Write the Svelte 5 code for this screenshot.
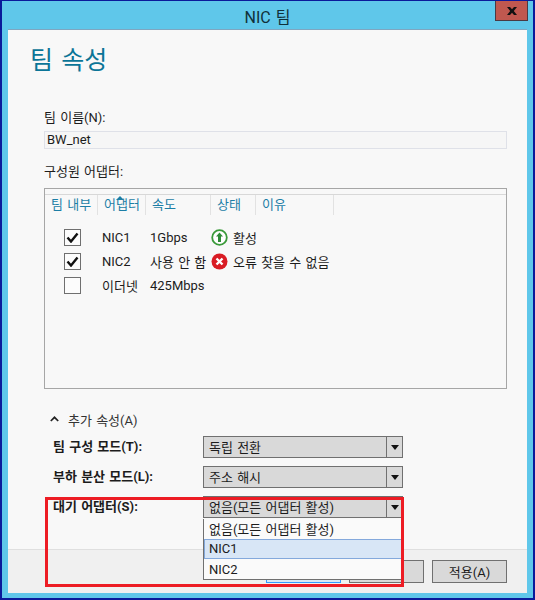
<script>
  const columns = [
    { label: '팀 내부', width: 53 },
    { label: '어댑터', width: 48, sorted: true },
    { label: '속도', width: 65 },
    { label: '상태', width: 45 },
    { label: '이유', width: 78 }
  ];
  const adapters = [
    { on: true, name: 'NIC1', speed: '1Gbps', status: '활성', kind: 'up' },
    { on: true, name: 'NIC2', speed: '사용 안 함', status: '오류 찾을 수 없음', kind: 'err' },
    { on: false, name: '이더넷', speed: '425Mbps', status: '', kind: '' }
  ];
  const modes = [
    { label: '팀 구성 모드(T):', value: '독립 전환' },
    { label: '부하 분산 모드(L):', value: '주소 해시' },
    { label: '대기 어댑터(S):', value: '없음(모든 어댑터 활성)' }
  ];
</script>

<div class="window">
  <header class="titlebar">
    <span class="title">NIC 팀</span>
    <button class="close" aria-label="닫기">
      <svg width="12" height="10" viewBox="0 0 12 10"><path d="M1 1h3l2 2.2L8 1h3L7.8 5 11 9H8L6 6.8 4 9H1l3.200-4z" fill="#111"/></svg>
    </button>
  </header>

  <div class="client">
    <main class="body">
      <h1>팀 속성</h1>

      <label class="name-label" for="team">팀 이름(N):</label>
      <div class="name-input" id="team">BW_net</div>

      <div class="members-label">구성원 어댑터:</div>
      <section class="list">
        <div class="strip"></div>
        <div class="cols">
          {#each columns as c}
            <div class="col" style="width:{c.width}px">
              {#if c.sorted}<i class="sort"></i>{/if}
              {c.label}
            </div>
          {/each}
        </div>
        <div class="rows">
          {#each adapters as a}
            <div class="row">
              <span class="check">
                {#if a.on}
                  <svg width="13" height="11" viewBox="0 0 13 11"><path d="M1.500 5.500 5 9.500 11.500 1.500" fill="none" stroke="#111" stroke-width="2.400"/></svg>
                {/if}
              </span>
              <span class="nic">{a.name}</span>
              <span class="speed">{a.speed}</span>
              {#if a.kind === 'up'}
                <svg class="st" width="17" height="17" viewBox="0 0 17 17"><circle cx="8.500" cy="8.500" r="7.300" fill="#fff" stroke="#3a9a3a" stroke-width="1.800"/><path d="M8.500 3.500 12 7.500H10V13H7V7.500H5z" fill="#2e8b37"/></svg>
              {:else if a.kind === 'err'}
                <svg class="st" width="17" height="17" viewBox="0 0 17 17"><circle cx="8.500" cy="8.500" r="8" fill="#d91c24"/><path d="M5.500 5.500l6 6m0-6l-6 6" stroke="#fff" stroke-width="2.400"/></svg>
              {/if}
              <span class="status">{a.status}</span>
            </div>
          {/each}
        </div>
      </section>

      <div class="more">
        <svg width="9" height="6" viewBox="0 0 9 6"><path d="M.8 5 4.500 1.300 8.200 5" fill="none" stroke="#222" stroke-width="1.700"/></svg>
        <span>추가 속성(A)</span>
      </div>

      <div class="modes">
        {#each modes as m}
          <div class="mode">
            <span class="mode-label">{m.label}</span>
            <div class="combo">
              <span class="combo-value">{m.value}</span>
              <span class="combo-btn"><i class="tri"></i></span>
            </div>
          </div>
        {/each}
      </div>
    </main>

    <footer class="footer">
      <button class="btn default">확인</button>
      <button class="btn">취소</button>
      <button class="btn">적용(A)</button>
    </footer>

    <ul class="dropdown">
      <li>없음(모든 어댑터 활성)</li>
      <li class="hot">NIC1</li>
      <li>NIC2</li>
    </ul>
  </div>

  <div class="redbox"></div>
</div>

<style>
  :global(body) {
    margin: 0;
    background: #5fc7ea;
  }
  * { box-sizing: border-box; }
  .window {
    position: relative;
    width: 535px;
    height: 600px;
    display: flex;
    flex-direction: column;
    background: #5fc7ea;
    border: 1px solid #0a1a9a;
    border-width: 1px 2px 2px 2px;
    font: 13px Roboto, "Noto Sans CJK KR", sans-serif;
    word-spacing: 1px;
    color: #1c1c1c;
  }
  .titlebar {
    height: 28px;
    flex: none;
    position: relative;
    display: flex;
    align-items: center;
    justify-content: center;
  }
  .title { font-size: 16px; color: #10303a; margin-top: 1px; }
  .close {
    position: absolute;
    right: 5px;
    top: 0;
    width: 33px;
    height: 20px;
    padding: 0;
    background: #c0584f;
    border: 1px solid #4a3a44;
    border-top: 0;
    display: flex;
    align-items: center;
    justify-content: center;
  }
  .client {
    position: relative;
    flex: 1;
    margin: 0 6px 5px 6px;
    display: flex;
    flex-direction: column;
    background: #f8f8f8;
    border-top: 1px solid #7fa6c0;
  }
  .body {
    flex: 1;
    padding: 0 20px 0 36px;
    min-height: 0;
  }
  h1 {
    margin: 0;
    padding-top: 14px;
    margin-left: -14px;
    height: 73px;
    font-weight: 400;
    font-size: 25px;
    word-spacing: 2px;
    line-height: 34px;
    color: #0b7597;
  }
  .name-label { display: block; line-height: 18px; margin-top: 6px; }
  .name-input {
    margin-top: 4px;
    height: 18px;
    border: 1px solid #dfe1e8;
    background: #f6f6f6;
    padding-left: 2px;
    line-height: 16px;
  }
  .members-label { margin-top: 14px; line-height: 18px; }
  .list {
    margin-top: 7px;
    height: 201px;
    border: 1px solid #a6a6a6;
    background: #f8f8f8;
  }
  .strip { height: 6px; border-bottom: 1px solid #d8d8d8; }
  .cols { display: flex; height: 20px; }
  .col {
    position: relative;
    flex: none;
    padding-left: 6px;
    line-height: 20px;
    color: #1c7ea6;
    border-right: 1px solid #e2e2e2;
    white-space: nowrap;
  }
  .sort {
    position: absolute;
    left: 18px;
    top: 1px;
    border: 4px solid transparent;
    border-top: 0;
    border-bottom: 4px solid #1c7ea6;
  }
  .rows { padding-top: 10px; }
  .row {
    display: flex;
    align-items: center;
    height: 24px;
    padding-left: 19px;
    white-space: nowrap;
  }
  .check {
    width: 17px;
    height: 17px;
    flex: none;
    border: 1px solid #6f6f6f;
    background: #fcfcfc;
    display: flex;
    align-items: center;
    justify-content: center;
  }
  .nic { width: 48px; margin-left: 21px; flex: none; }
  .speed { width: 61px; flex: none; }
  .st { flex: none; }
  .status { margin-left: 5px; }
  .more {
    margin-top: 22px;
    height: 16px;
    display: flex;
    align-items: center;
    gap: 9px;
    padding-left: 6px;
    color: #333;
  }
  .modes { margin-top: 9px; padding-left: 9px; }
  .mode {
    display: flex;
    height: 30px;
  }
  .mode-label {
    width: 150px;
    flex: none;
    font-weight: 700;
    line-height: 22px;
  }
  .combo {
    width: 200px;
    height: 22px;
    display: flex;
    background: #d9d9d9;
    border: 1px solid #707070;
  }
  .combo-value { flex: 1; padding-left: 5px; line-height: 21px; }
  .combo-btn {
    width: 16px;
    border-left: 1px solid #707070;
    display: flex;
    align-items: center;
    justify-content: center;
  }
  .tri {
    border: 4px solid transparent;
    border-bottom: 0;
    border-top: 5px solid #111;
  }
  .footer {
    height: 44px;
    flex: none;
    background: #f0f0f0;
    border-top: 1px solid #dfdfdf;
    display: flex;
    justify-content: flex-end;
    align-items: flex-start;
    gap: 8px;
    padding: 10px 20px 0 0;
  }
  .btn {
    width: 75px;
    height: 23px;
    padding: 0;
    background: #d9d9d9;
    border: 1px solid #707070;
    font: inherit;
    color: #1c1c1c;
  }
  .btn.default { border: 1px solid #3399ff; background: #d9e8f5; }
  .dropdown {
    position: absolute;
    left: 195px;
    top: 489px;
    width: 199px;
    height: 61px;
    margin: 0;
    padding: 0;
    list-style: none;
    background: #fafafa;
    border: 1px solid #707070;
    border-top: 0;
  }
  .dropdown li {
    height: 20px;
    line-height: 21px;
    padding-left: 5px;
  }
  .dropdown .hot {
    background: #d8e6f6;
    border-top: 1px solid #84a9dc;
    border-bottom: 1px solid #84a9dc;
    border-left: 1px solid #84a9dc;
    line-height: 18px;
    padding-left: 4px;
  }
  .redbox {
    position: absolute;
    left: 43px;
    top: 496px;
    width: 359px;
    height: 90px;
    border: 3px solid #ed1c24;
    pointer-events: none;
  }
</style>
